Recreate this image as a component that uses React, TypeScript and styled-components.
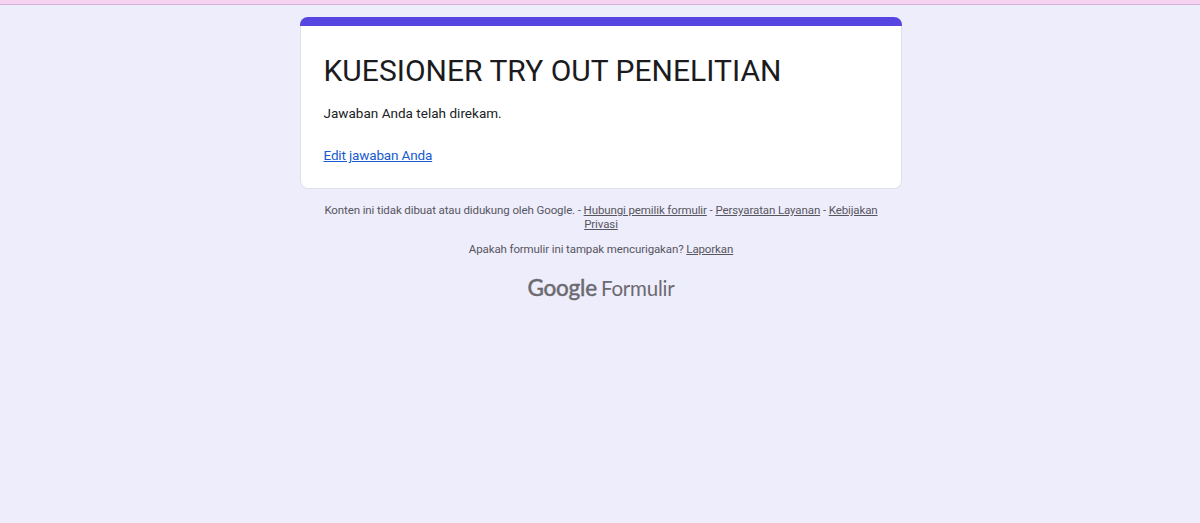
import React from 'react';
import styled, {createGlobalStyle} from 'styled-components';

const GlobalStyle = createGlobalStyle`
    body {
        margin: 0;
        background-color: #eeedfb;
        font-family: Roboto, Arial, sans-serif;
    }
`;

const Page = styled.div`
    box-sizing: border-box;
    min-height: 523px;
`;

const TopStrip = styled.div`
    box-sizing: border-box;
    height: 5px;
    background-color: #f5d3f0;
    border-bottom: 1px solid #d3b4d6;
`;

const Column = styled.main`
    width: 602px;
    margin: 12px 0 0 300px;
`;

const Card = styled.section`
    box-sizing: border-box;
    height: 172px;
    background-color: #fff;
    border: 1px solid #dfdfe8;
    border-top: 0;
    border-radius: 8px;
`;

const CardAccent = styled.div`
    height: 9px;
    margin: 0 -1px;
    border-radius: 8px 8px 0 0;
    background-color: #5645e0;
`;

const CardBody = styled.div`
    padding: 25px 22.5px 0;
`;

const Title = styled.h1`
    margin: 0;
    font-size: 30px;
    font-weight: 400;
    line-height: 40px;
    letter-spacing: 0.02px;
    color: #1b1b1d;
    white-space: nowrap;
`;

const Message = styled.p`
    margin: 12px 0 0;
    font-size: 13.5px;
    line-height: 20px;
    letter-spacing: 0.02px;
    color: #202124;
`;

const EditLink = styled.a`
    display: inline-block;
    margin-top: 22px;
    font-size: 13.5px;
    line-height: 20px;
    letter-spacing: -0.15px;
    color: #185bcf;
    text-decoration: underline;
`;

const Notice = styled.p<{$top: number}>`
    margin: ${p => p.$top}px 0 0;
    font-size: 11.5px;
    line-height: 14px;
    letter-spacing: -0.11px;
    text-align: center;
    color: #57565f;

    a {
        color: inherit;
        text-decoration: underline;
    }
`;

const Brand = styled.div`
    display: flex;
    align-items: baseline;
    justify-content: center;
    gap: 4px;
    margin-top: 18px;
    font-family: Lato, Roboto, sans-serif;
    line-height: 28px;
    color: #6b6a70;
`;

const Google = styled.span`
    font-size: 22.5px;
    letter-spacing: -0.2px;
    -webkit-text-stroke: 0.5px currentColor;
`;

const Product = styled.span`
    font-size: 20.5px;
    letter-spacing: -0.2px;
`;

const App: React.FC = () => (
    <Page>
        <GlobalStyle />
        <TopStrip />
        <Column>
            <Card>
                <CardAccent />
                <CardBody>
                    <Title>KUESIONER TRY OUT PENELITIAN</Title>
                    <Message>Jawaban Anda telah direkam.</Message>
                    <EditLink href="#">Edit jawaban Anda</EditLink>
                </CardBody>
            </Card>
            <Notice $top={14}>
                Konten ini tidak dibuat atau didukung oleh Google. - <a href="#">Hubungi pemilik formulir</a> -{' '}
                <a href="#">Persyaratan Layanan</a> - <a href="#">Kebijakan<br />Privasi</a>
            </Notice>
            <Notice $top={11}>
                Apakah formulir ini tampak mencurigakan? <a href="#">Laporkan</a>
            </Notice>
            <Brand>
                <Google>Google</Google>
                <Product>Formulir</Product>
            </Brand>
        </Column>
    </Page>
);

export default App;
